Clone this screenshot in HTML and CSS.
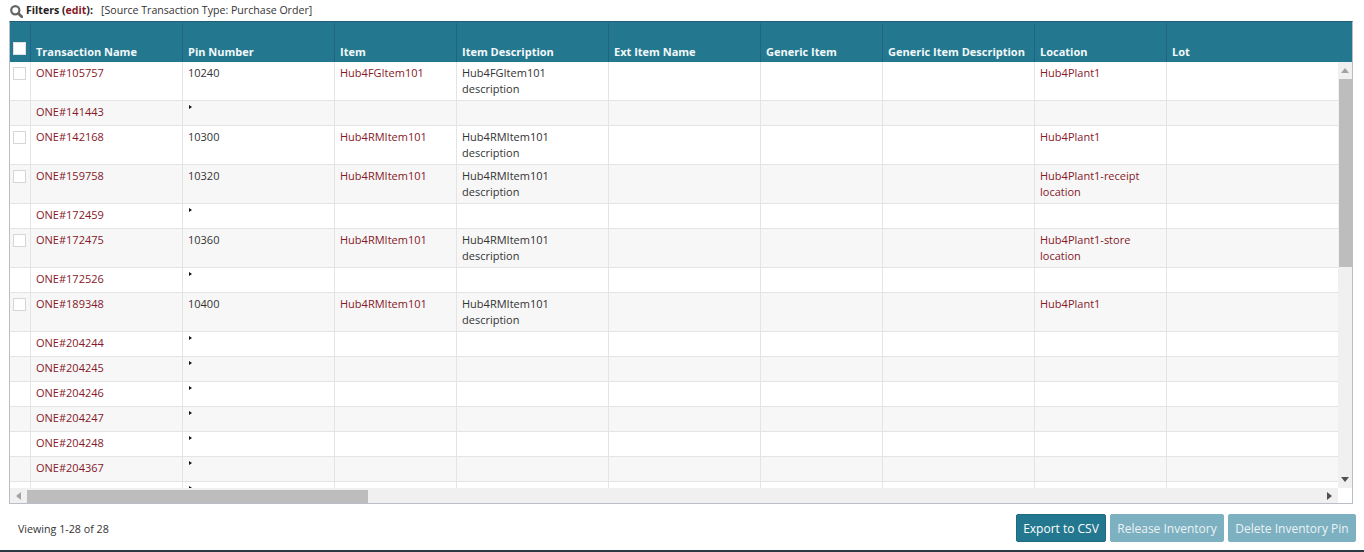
FILE: index.html
```html
<!DOCTYPE html>
<html lang="en">
<head>
<meta charset="utf-8">
<title>Inventory Pins</title>
<link rel="stylesheet" href="styles.css">
</head>
<body>
<div class="page">
  <div class="filters">
    <svg class="search" viewBox="0 0 13 13" width="13" height="13"><circle cx="5.3" cy="5.3" r="4.1" fill="none" stroke="#666" stroke-width="2.2"/><path d="M8.4 8.4 11.8 11.8" stroke="#666" stroke-width="2.8" stroke-linecap="round"/></svg>
    <b class="flabel">Filters (<a class="edit">edit</a>):</b>
    <span class="fvalue">[Source Transaction Type: Purchase Order]</span>
  </div>
  <div class="grid">
    <table class="thead">
      <colgroup><col class="c0"><col class="c1"><col class="c2"><col class="c3"><col class="c4"><col class="c5"><col class="c6"><col class="c7"><col class="c8"><col class="c9"></colgroup>
      <tr>
        <th><span class="hcheck"></span></th><th>Transaction Name</th><th>Pin Number</th><th>Item</th><th>Item Description</th><th>Ext Item Name</th><th>Generic Item</th><th>Generic Item Description</th><th>Location</th><th>Lot</th>
      </tr>
    </table>
    <div class="middle">
      <div class="viewport">
        <table class="tbody">
          <colgroup><col class="c0"><col class="c1"><col class="c2"><col class="c3"><col class="c4"><col class="c5"><col class="c6"><col class="c7"><col class="c8"><col class="c9b"></colgroup>
          <tr class="tall"><td><span class="check"></span></td><td class="link">ONE#105757</td><td>10240</td><td class="link">Hub4FGItem101</td><td>Hub4FGItem101 description</td><td></td><td></td><td></td><td class="link">Hub4Plant1</td><td></td></tr>
          <tr class="short alt"><td></td><td class="link">ONE#141443</td><td><i class="tri"></i></td><td></td><td></td><td></td><td></td><td></td><td></td><td></td></tr>
          <tr class="tall"><td><span class="check"></span></td><td class="link">ONE#142168</td><td>10300</td><td class="link">Hub4RMItem101</td><td>Hub4RMItem101 description</td><td></td><td></td><td></td><td class="link">Hub4Plant1</td><td></td></tr>
          <tr class="tall alt"><td><span class="check"></span></td><td class="link">ONE#159758</td><td>10320</td><td class="link">Hub4RMItem101</td><td>Hub4RMItem101 description</td><td></td><td></td><td></td><td class="link">Hub4Plant1-receipt location</td><td></td></tr>
          <tr class="short"><td></td><td class="link">ONE#172459</td><td><i class="tri"></i></td><td></td><td></td><td></td><td></td><td></td><td></td><td></td></tr>
          <tr class="tall alt"><td><span class="check"></span></td><td class="link">ONE#172475</td><td>10360</td><td class="link">Hub4RMItem101</td><td>Hub4RMItem101 description</td><td></td><td></td><td></td><td class="link">Hub4Plant1-store location</td><td></td></tr>
          <tr class="short"><td></td><td class="link">ONE#172526</td><td><i class="tri"></i></td><td></td><td></td><td></td><td></td><td></td><td></td><td></td></tr>
          <tr class="tall alt"><td><span class="check"></span></td><td class="link">ONE#189348</td><td>10400</td><td class="link">Hub4RMItem101</td><td>Hub4RMItem101 description</td><td></td><td></td><td></td><td class="link">Hub4Plant1</td><td></td></tr>
          <tr class="short"><td></td><td class="link">ONE#204244</td><td><i class="tri"></i></td><td></td><td></td><td></td><td></td><td></td><td></td><td></td></tr>
          <tr class="short alt"><td></td><td class="link">ONE#204245</td><td><i class="tri"></i></td><td></td><td></td><td></td><td></td><td></td><td></td><td></td></tr>
          <tr class="short"><td></td><td class="link">ONE#204246</td><td><i class="tri"></i></td><td></td><td></td><td></td><td></td><td></td><td></td><td></td></tr>
          <tr class="short alt"><td></td><td class="link">ONE#204247</td><td><i class="tri"></i></td><td></td><td></td><td></td><td></td><td></td><td></td><td></td></tr>
          <tr class="short"><td></td><td class="link">ONE#204248</td><td><i class="tri"></i></td><td></td><td></td><td></td><td></td><td></td><td></td><td></td></tr>
          <tr class="short alt"><td></td><td class="link">ONE#204367</td><td><i class="tri"></i></td><td></td><td></td><td></td><td></td><td></td><td></td><td></td></tr>
          <tr class="short"><td></td><td class="link"></td><td><i class="tri"></i></td><td></td><td></td><td></td><td></td><td></td><td></td><td></td></tr>
        </table>
      </div>
      <div class="vscroll">
        <span class="arrow-btn"><i class="ar up"></i></span>
        <span class="vthumb"></span>
        <span class="vrest"></span>
        <span class="arrow-btn"><i class="ar down"></i></span>
      </div>
    </div>
    <div class="hscroll">
      <span class="harrow"><i class="ar left"></i></span>
      <span class="hthumb"></span>
      <span class="hrest"></span>
      <span class="harrow"><i class="ar right"></i></span>
      <span class="corner"></span>
    </div>
  </div>
  <div class="footer">
    <span class="viewing">Viewing 1-28 of 28</span>
    <div class="buttons">
      <button class="btn btn-export">Export to CSV</button>
      <button class="btn btn-release off">Release Inventory</button>
      <button class="btn btn-delete off">Delete Inventory Pin</button>
    </div>
  </div>
</div>
<div class="baseline"></div>
</body>
</html>
```
FILE: styles.css
```css
* { box-sizing: border-box; }
html, body { margin: 0; padding: 0; height: 552px; overflow: hidden; background: #fff; }
body { font-family: "Open Sans", "Liberation Sans", sans-serif; font-size: 11px; color: #333; display: flex; flex-direction: column; }
.page { flex: 1; padding: 0 0 0 9px; min-height: 0; }
.filters { height: 21px; display: flex; align-items: center; padding-bottom: 1px; font-size: 10.6px; color: #333; }
.search { margin-right: 4px; margin-left: 1px; margin-top: 2px; }
.flabel { font-weight: 700; color: #222; margin-right: 8px; margin-left: -1px; }
.edit { color: #861828; }
.fvalue { color: #333; }
.grid { width: 1344px; height: 483px; border: 1px solid #b9bec8; border-top-color: #1f5f78; display: flex; flex-direction: column; }
table { border-collapse: separate; border-spacing: 0; table-layout: fixed; }
.c0 { width: 21px; } .c1 { width: 152px; } .c2 { width: 152px; } .c3 { width: 122px; } .c4 { width: 152px; }
.c5 { width: 152px; } .c6 { width: 122px; } .c7 { width: 152px; } .c8 { width: 132px; } .c9 { width: 185px; } .c9b { width: 171px; }
.thead { width: 1342px; height: 40px; background: #237890; flex: none; border-top: 1px solid #237890; }
.thead th { border-right: 1px solid #1f6487; padding: 0 5px 3px 5px; height: 39px; vertical-align: bottom; text-align: left; font-size: 11px; font-weight: 700; color: #f4f8fa; white-space: nowrap; }
.thead th:first-child { padding: 0 0 7px 3px; }
.thead th:last-child { border-right: 0; }
.hcheck { display: block; width: 13px; height: 13px; background: #fff; border: 1px solid #e0e0e0; }
.middle { display: flex; height: 426px; flex: none; }
.viewport { flex: 1; overflow: hidden; min-width: 0; }
.tbody { width: 1328px; }
.tbody td { border-right: 1px solid #e4e4e4; border-bottom: 1px solid #e4e4e4; padding: 3px 5px 0; vertical-align: top; font-size: 11px; line-height: 16px; color: #333; }
.tbody td:first-child { padding: 5px 0 0 3px; }
.tbody td:last-child { border-right: 0; }
.tall td { height: 39px; }
.short td { height: 25px; padding-top: 3px; }
.alt { background: #f7f7f7; }
.tbody td.link { color: #861828; }
.check { display: block; width: 13px; height: 13px; background: #fff; border: 1px solid #d6d6d6; }
.tri { display: block; width: 0; height: 0; margin-top: 1px; margin-left: 1px; border-left: 3px solid #111; border-top: 2.5px solid transparent; border-bottom: 2.5px solid transparent; }
.vscroll { width: 14px; flex: none; background: #f0f0f0; display: flex; flex-direction: column; }
.arrow-btn { height: 17px; flex: none; display: flex; align-items: center; justify-content: center; }
.vthumb { height: 188px; flex: none; background: #bdbdbd; margin-left: 1px; }
.vrest { flex: 1; }
.hscroll { height: 15px; flex: none; display: flex; background: #f0f0f0; }
.harrow { width: 17px; flex: none; display: flex; align-items: center; justify-content: center; }
.hthumb { width: 341px; flex: none; background: #bdbdbd; margin-top: 2px; }
.hrest { flex: 1; }
.corner { width: 14px; flex: none; background: #fff; }
.ar { display: block; width: 0; height: 0; border: 0 solid transparent; }
.up { border-width: 0 4px 5px; border-bottom-color: #a3a3a3; }
.down { border-width: 5px 4px 0; border-top-color: #505050; }
.left { border-width: 4px 5px 4px 0; border-right-color: #a3a3a3; }
.right { border-width: 4px 0 4px 5px; border-left-color: #505050; }
.footer { height: 46px; display: flex; align-items: center; justify-content: space-between; padding: 2px 8px 0 9px; }
.viewing { font-size: 10.7px; color: #333; margin-top: 1px; }
.buttons { display: flex; gap: 4px; }
.btn { height: 28px; padding: 0; font: 500 12px "Open Sans", "Liberation Sans", sans-serif; color: #fff; background: #237890; border: 1px solid #1f6a80; border-radius: 2px; }
.btn-export { width: 90px; }
.btn-release { width: 114px; }
.btn-delete { width: 128px; }
.btn.off { background: #7db0c0; border-color: #7db0c0; color: #eaf3f6; }
.baseline { height: 2px; flex: none; background: #2b3a45; }
```
